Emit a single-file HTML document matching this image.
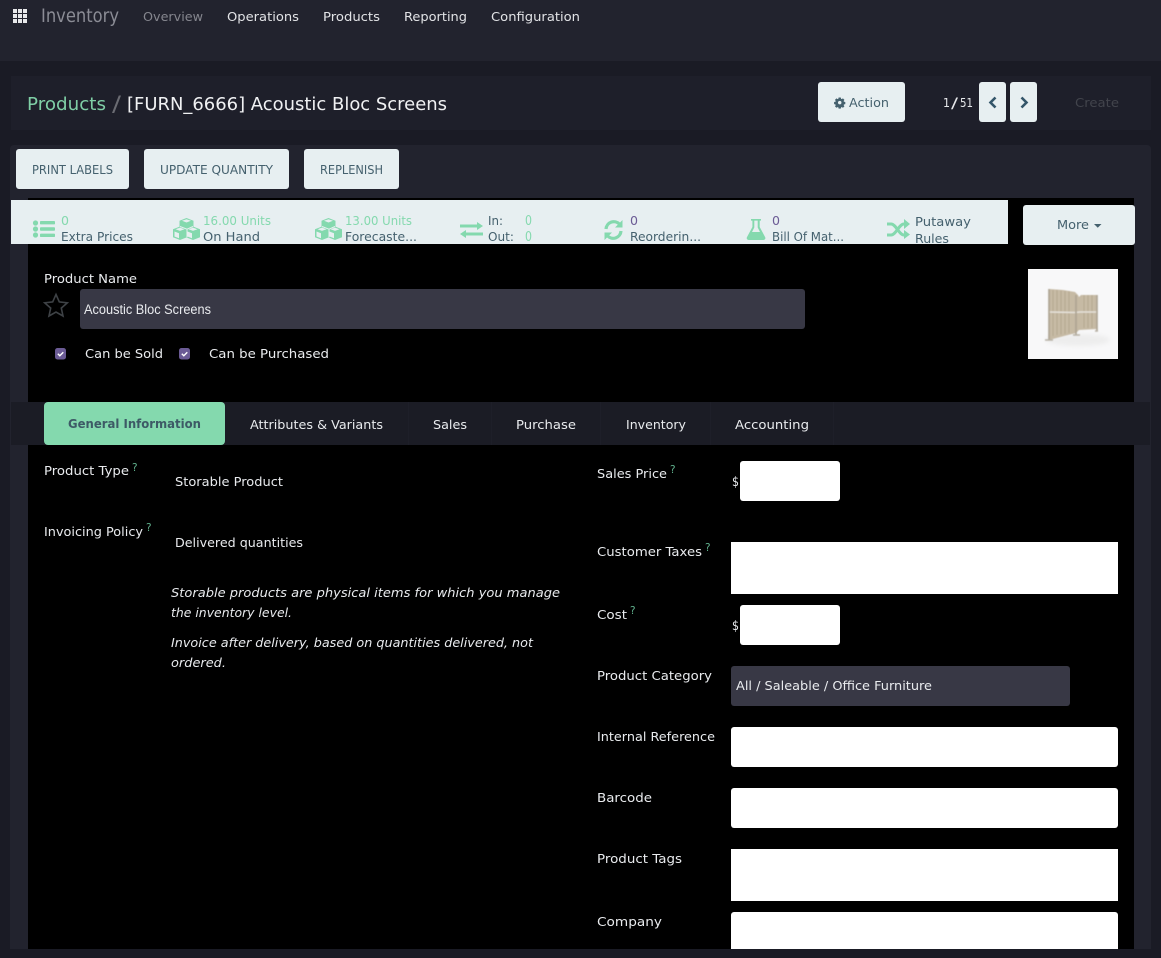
<!DOCTYPE html>
<html lang="en"><head><meta charset="utf-8"><title>Acoustic Bloc Screens</title>
<style>
html,body{margin:0;padding:0;width:1161px;height:958px;overflow:hidden;background:#1a1b25}
.b{position:absolute;box-sizing:border-box}
.btn{background:#e7eff1;border-radius:3px}
.w{background:#fff}.r{border-radius:3px}
svg{position:absolute;left:0;top:0}
text{font-family:"DejaVu Sans","Liberation Sans",sans-serif;font-size:12.5px;fill:#e9ebee}
.g{fill:#84d9ae}.d{fill:#45616e}.p{fill:#6b5b95}.q{fill:#5fae8b;font-size:10.5px}
.nav{fill:#e2e3e6;font-size:12.5px}
</style></head><body>
<div class="b" style="left:0;top:0;width:1161px;height:61px;background:#22232e"></div>
<div class="b" style="left:11px;top:76px;width:1140px;height:54px;background:#1e1f2a"></div>
<div class="b" style="left:10px;top:145px;width:1141px;height:804px;background:#22232e;border-radius:4px 4px 0 0"></div>
<div class="b" style="left:28px;top:198px;width:1106px;height:751px;background:#000"></div>
<div class="b" style="left:11px;top:200px;width:997px;height:44px;background:#e7eff1"></div>
<div class="b btn" style="left:1023px;top:205px;width:112px;height:40px"></div>
<div class="b btn" style="left:16px;top:149px;width:113px;height:40px"></div>
<div class="b btn" style="left:144px;top:149px;width:145px;height:40px"></div>
<div class="b btn" style="left:304px;top:149px;width:95px;height:40px"></div>
<div class="b btn" style="left:818px;top:82px;width:87px;height:40px"></div>
<div class="b btn" style="left:979px;top:82px;width:27px;height:40px"></div>
<div class="b btn" style="left:1010px;top:82px;width:27px;height:40px"></div>
<div class="b r" style="left:80px;top:289px;width:725px;height:40px;background:#383845"></div>
<div class="b" style="left:11px;top:402px;width:1139px;height:43px;background:#1b1c25"></div>
<div class="b" style="left:408px;top:402px;width:1px;height:43px;background:#1e1f29"></div>
<div class="b" style="left:491px;top:402px;width:1px;height:43px;background:#1e1f29"></div>
<div class="b" style="left:600px;top:402px;width:1px;height:43px;background:#1e1f29"></div>
<div class="b" style="left:710px;top:402px;width:1px;height:43px;background:#1e1f29"></div>
<div class="b" style="left:833px;top:402px;width:1px;height:43px;background:#1e1f29"></div>
<div class="b" style="left:44px;top:402px;width:181px;height:43px;background:#84d9ae;border-radius:4px"></div>
<div class="b w r" style="left:740px;top:461px;width:100px;height:40px"></div>
<div class="b w" style="left:731px;top:542px;width:387px;height:52px"></div>
<div class="b w r" style="left:740px;top:605px;width:100px;height:40px"></div>
<div class="b r" style="left:731px;top:666px;width:339px;height:40px;background:#383845"></div>
<div class="b w r" style="left:731px;top:727px;width:387px;height:40px"></div>
<div class="b w r" style="left:731px;top:788px;width:387px;height:40px"></div>
<div class="b w" style="left:731px;top:849px;width:387px;height:52px"></div>
<div class="b w" style="left:731px;top:912px;width:387px;height:37px;border-radius:3px 3px 0 0"></div>

<svg width="1161" height="958" viewBox="0 0 1161 958" xmlns="http://www.w3.org/2000/svg">
<defs><filter id="soft" x="-10%" y="-10%" width="120%" height="120%"><feGaussianBlur stdDeviation="0.5"/></filter>
<filter id="soft2" x="-20%" y="-50%" width="140%" height="200%"><feGaussianBlur stdDeviation="2.5"/></filter></defs>
<!-- grid icon -->
<g fill="#e8e9eb">
<rect x="13" y="9" width="4" height="4"/><rect x="18" y="9" width="4" height="4"/><rect x="23" y="9" width="4" height="4"/>
<rect x="13" y="14" width="4" height="4"/><rect x="18" y="14" width="4" height="4"/><rect x="23" y="14" width="4" height="4"/>
<rect x="13" y="19" width="4" height="4"/><rect x="18" y="19" width="4" height="4"/><rect x="23" y="19" width="4" height="4"/>
</g>
<text x="41" y="22" textLength="78" lengthAdjust="spacingAndGlyphs" style="font-size:19px;fill:#8b8c95">Inventory</text>
<text x="143" y="21" textLength="60" lengthAdjust="spacingAndGlyphs" style="fill:#85868e">Overview</text>
<text class="nav" x="227" y="21" textLength="72" lengthAdjust="spacingAndGlyphs">Operations</text>
<text class="nav" x="323" y="21" textLength="57" lengthAdjust="spacingAndGlyphs">Products</text>
<text class="nav" x="404" y="21" textLength="63" lengthAdjust="spacingAndGlyphs">Reporting</text>
<text class="nav" x="491" y="21" textLength="89" lengthAdjust="spacingAndGlyphs">Configuration</text>

<text x="27" y="110" textLength="79" lengthAdjust="spacingAndGlyphs" style="font-size:18px;fill:#7fcfa6">Products</text>
<text x="112" y="111" textLength="9" lengthAdjust="spacingAndGlyphs" style="font-size:21px;fill:#6a6b72">/</text>
<text x="127" y="110" textLength="320" lengthAdjust="spacingAndGlyphs" style="font-size:18px;fill:#f0f1f3">[FURN_6666] Acoustic Bloc Screens</text>

<!-- action -->
<g transform="translate(839.700 102.600) scale(.8) translate(-841 -103)">
<path fill="#45616e" d="M840 97h2l.4 1.600 1.200.5 1.400-.9 1.400 1.400-.9 1.400.5 1.200 1.600.4v2l-1.600.4-.5 1.200.9 1.400-1.400 1.400-1.400-.9-1.200.5-.4 1.600h-2l-.4-1.600-1.200-.5-1.400.9-1.400-1.400.9-1.400-.5-1.200-1.600-.4v-2l1.600-.4.5-1.200-.9-1.400 1.400-1.400 1.400.9 1.200-.5zM841 100.400a2.600 2.600 0 1 0 0 5.200 2.600 2.600 0 0 0 0-5.200z" fill-rule="evenodd" stroke="#45616e" stroke-width=".8"/>
</g>
<text class="d" x="849" y="107" textLength="40" lengthAdjust="spacingAndGlyphs">Action</text>
<text x="943" y="107" textLength="7" lengthAdjust="spacingAndGlyphs" style="fill:#e6e7ea">1</text>
<text x="951" y="108" textLength="7" lengthAdjust="spacingAndGlyphs" style="fill:#e6e7ea;font-size:14px">/</text>
<text x="960" y="107" textLength="13" lengthAdjust="spacingAndGlyphs" style="fill:#e6e7ea">51</text>
<path d="M995.500 97.500l-5 5 5 5" fill="none" stroke="#34566a" stroke-width="2.600"/>
<path d="M1021.500 97.500l5 5-5 5" fill="none" stroke="#34566a" stroke-width="2.600"/>
<text x="1075" y="107" textLength="44" lengthAdjust="spacingAndGlyphs" style="fill:#42444c">Create</text>

<text class="d" x="32" y="174" textLength="81" lengthAdjust="spacingAndGlyphs" style="font-size:12.500px">PRINT LABELS</text>
<text class="d" x="160" y="174" textLength="113" lengthAdjust="spacingAndGlyphs" style="font-size:12.500px">UPDATE QUANTITY</text>
<text class="d" x="320" y="174" textLength="63" lengthAdjust="spacingAndGlyphs" style="font-size:12.500px">REPLENISH</text>

<!-- stat icons -->
<g fill="#84d9ae">
<circle cx="35.500" cy="223" r="2.600"/><circle cx="35.500" cy="229" r="2.600"/><circle cx="35.500" cy="235" r="2.600"/>
<rect x="40" y="221" width="15" height="3.400" rx=".8"/><rect x="40" y="227.300" width="15" height="3.400" rx=".8"/><rect x="40" y="233.600" width="15" height="3.400" rx=".8"/>
</g>
<g fill="#84d9ae">
<path d="M186.500 218l7 2.700v7.600l-7 2.700-7-2.700v-7.600z"/><path d="M180 226.500l7 2.700v8l-7 2.800-7-2.800v-8z"/><path d="M193 226.500l7 2.700v8l-7 2.800-7-2.800v-8z"/>
</g>
<g fill="none" stroke="#e7eff1" stroke-width="1"><path d="M180 226.500l7 2.700M193 226.500l-6 2.700v8M187 237.200"/></g>
<g fill="#e7eff1"><path d="M182 220.800l4.500-1.600 4.500 1.600-4.500 1.700z"/><path d="M175.500 229.200l4.500-1.600 4.500 1.600-4.500 1.700z"/><path d="M188.500 229.200l4.500-1.600 4.500 1.600-4.500 1.700z"/><path d="M174.500 231.500l4.500 1.700v5l-4.500-1.700z"/><path d="M187.500 231.500l4.500 1.700v5l-4.500-1.700z"/></g>
<g fill="#84d9ae">
<path d="M328.500 218l7 2.700v7.600l-7 2.700-7-2.700v-7.600z"/><path d="M322 226.500l7 2.700v8l-7 2.800-7-2.800v-8z"/><path d="M335 226.500l7 2.700v8l-7 2.800-7-2.800v-8z"/>
</g>
<g fill="none" stroke="#e7eff1" stroke-width="1"><path d="M322 226.500l7 2.700M335 226.500l-6 2.700v8"/></g>
<g fill="#e7eff1"><path d="M324 220.800l4.500-1.600 4.500 1.600-4.500 1.700z"/><path d="M317.500 229.200l4.500-1.600 4.500 1.600-4.500 1.700z"/><path d="M330.500 229.200l4.500-1.600 4.500 1.600-4.500 1.700z"/><path d="M316.500 231.500l4.500 1.700v5l-4.500-1.700z"/><path d="M329.500 231.500l4.500 1.700v5l-4.500-1.700z"/></g>
<path fill="#84d9ae" d="M460 224.500h17v-2.500l6 4-6 4v-2.500h-17zM483 232.500h-17v-2.500l-6 4 6 4v-2.500h17z"/>
<path fill="none" stroke="#84d9ae" stroke-width="3.200" d="M606 229a7.800 7.800 0 0 1 13.500-4.800M621 231a7.800 7.800 0 0 1-13.500 4.800"/>
<path fill="#84d9ae" d="M622.500 220v7.500h-7.500zM604.500 240v-7.500h7.500z"/>
<path fill="#84d9ae" d="M751 219h10v1.600h-1.300v6.400l5.500 10.300c.6 1.300-.2 2.700-1.700 2.700h-14.900c-1.500 0-2.300-1.400-1.700-2.700l5.500-10.300v-6.400H751zm3.300 1.600v6.900l-2.300 4.500h8l-2.300-4.500v-6.900z" fill-rule="evenodd"/>
<path fill="none" stroke="#84d9ae" stroke-width="3" d="M887 224h4c5 0 8 11 13 11h1M887 235h4c5 0 8-11 13-11h1"/>
<path fill="#84d9ae" d="M904 219l6 5-6 5zM904 230l6 4.500-6 4.500z"/>

<text class="g" x="61" y="225" textLength="8" lengthAdjust="spacingAndGlyphs">0</text>
<text class="d" x="61" y="241" textLength="72" lengthAdjust="spacingAndGlyphs">Extra Prices</text>
<text class="g" x="203" y="225" textLength="68" lengthAdjust="spacingAndGlyphs">16.00 Units</text>
<text class="d" x="203" y="241" textLength="57" lengthAdjust="spacingAndGlyphs">On Hand</text>
<text class="g" x="345" y="225" textLength="67" lengthAdjust="spacingAndGlyphs">13.00 Units</text>
<text class="d" x="345" y="241" textLength="72" lengthAdjust="spacingAndGlyphs">Forecaste...</text>
<text class="d" x="488" y="225" textLength="15" lengthAdjust="spacingAndGlyphs">In:</text>
<text class="d" x="488" y="241" textLength="26" lengthAdjust="spacingAndGlyphs">Out:</text>
<text class="g" x="525" y="225" textLength="7" lengthAdjust="spacingAndGlyphs" style="font-size:13px">0</text>
<text class="g" x="525" y="241" textLength="7" lengthAdjust="spacingAndGlyphs" style="font-size:13px">0</text>
<text class="p" x="630" y="225" textLength="8" lengthAdjust="spacingAndGlyphs">0</text>
<text class="d" x="630" y="241" textLength="71" lengthAdjust="spacingAndGlyphs">Reorderin...</text>
<text class="p" x="772" y="225" textLength="8" lengthAdjust="spacingAndGlyphs">0</text>
<text class="d" x="772" y="241" textLength="72" lengthAdjust="spacingAndGlyphs">Bill Of Mat...</text>
<text class="d" x="915" y="226" textLength="56" lengthAdjust="spacingAndGlyphs">Putaway</text>
<text class="d" x="915" y="243" textLength="34" lengthAdjust="spacingAndGlyphs">Rules</text>
<text class="d" x="1057" y="229" textLength="32" lengthAdjust="spacingAndGlyphs">More</text>
<path fill="#45616e" d="M1094 224h7.500l-3.750 3.800z"/>

<text x="44" y="283" textLength="93" lengthAdjust="spacingAndGlyphs">Product Name</text>
<path fill="none" stroke="#3e4246" stroke-width="1.600" d="M56 294.500l3.300 7.400 8 .9-6 5.300 1.700 7.900-7-4-7 4 1.700-7.900-6-5.300 8-.9z"/>
<text x="84" y="314" textLength="127" lengthAdjust="spacingAndGlyphs" style="font-family:'Liberation Sans',sans-serif;font-size:13.500px">Acoustic Bloc Screens</text>
<rect x="55" y="348" width="11" height="11.500" rx="2.500" fill="#6b5b95"/>
<path d="M57.800 353.800l2 2 3.500-3.600" fill="none" stroke="#fff" stroke-width="1.400"/>
<rect x="179" y="348" width="11" height="11.500" rx="2.500" fill="#6b5b95"/>
<path d="M181.800 353.800l2 2 3.500-3.600" fill="none" stroke="#fff" stroke-width="1.400"/>
<text x="85" y="358" textLength="78" lengthAdjust="spacingAndGlyphs">Can be Sold</text>
<text x="209" y="358" textLength="120" lengthAdjust="spacingAndGlyphs">Can be Purchased</text>

<!-- product image -->
<rect x="1028" y="269" width="90" height="90" fill="#f8f8f9"/>
<ellipse cx="1078" cy="340" rx="32" ry="6" fill="#ededed" filter="url(#soft2)"/>
<g filter="url(#soft)">
<path fill="#c6baa4" d="M1049 289l14 1 12 2 3 3 1 2 2-2 16 0v34l-18 1-3 3-12 3-15 4z"/>
<path stroke="#b5a88f" stroke-width="1" d="M1053 290v46M1057 290v45M1061 290.500v44M1065 291v43M1069 291v42M1084 295v33M1088 295v33M1092 295v33"/>
<path stroke="#e6e2da" stroke-width="1.500" d="M1049 312l26 .5 5-.5 17 0"/>
<path stroke="#aca392" stroke-width="1.600" d="M1049 289v51M1076 295v40M1097 295v36"/>
<path stroke="#b8b2a6" stroke-width="1.500" d="M1045 340h8M1073 335h7M1095 331h3"/>
</g>

<!-- tabs -->
<text x="68" y="428" textLength="133" lengthAdjust="spacingAndGlyphs" style="font-weight:bold;fill:#3d5a66;font-size:12.500px">General Information</text>
<text x="250" y="429" textLength="133" lengthAdjust="spacingAndGlyphs">Attributes &amp; Variants</text>
<text x="433" y="429" textLength="34" lengthAdjust="spacingAndGlyphs">Sales</text>
<text x="516" y="429" textLength="60" lengthAdjust="spacingAndGlyphs">Purchase</text>
<text x="626" y="429" textLength="60" lengthAdjust="spacingAndGlyphs">Inventory</text>
<text x="735" y="429" textLength="74" lengthAdjust="spacingAndGlyphs">Accounting</text>

<!-- left form -->
<text x="44" y="475" textLength="85" lengthAdjust="spacingAndGlyphs">Product Type</text><text class="q" x="132" y="471">?</text>
<text x="175" y="486" textLength="108" lengthAdjust="spacingAndGlyphs">Storable Product</text>
<text x="44" y="536" textLength="99" lengthAdjust="spacingAndGlyphs">Invoicing Policy</text><text class="q" x="146" y="531">?</text>
<text x="175" y="547" textLength="128" lengthAdjust="spacingAndGlyphs">Delivered quantities</text>
<text x="171" y="597" textLength="389" lengthAdjust="spacingAndGlyphs" font-style="italic">Storable products are physical items for which you manage</text>
<text x="171" y="617" textLength="121" lengthAdjust="spacingAndGlyphs" font-style="italic">the inventory level.</text>
<text x="171" y="647" textLength="362" lengthAdjust="spacingAndGlyphs" font-style="italic">Invoice after delivery, based on quantities delivered, not</text>
<text x="171" y="667" textLength="55" lengthAdjust="spacingAndGlyphs" font-style="italic">ordered.</text>

<!-- right form -->
<text x="597" y="478" textLength="70" lengthAdjust="spacingAndGlyphs">Sales Price</text><text class="q" x="670" y="473">?</text>
<text x="732" y="486" textLength="7" lengthAdjust="spacingAndGlyphs" style="font-size:13.500px">$</text>
<text x="597" y="556" textLength="105" lengthAdjust="spacingAndGlyphs">Customer Taxes</text><text class="q" x="705" y="551">?</text>
<text x="597" y="619" textLength="30" lengthAdjust="spacingAndGlyphs">Cost</text><text class="q" x="630" y="614">?</text>
<text x="732" y="630" textLength="7" lengthAdjust="spacingAndGlyphs" style="font-size:13.500px">$</text>
<text x="597" y="680" textLength="115" lengthAdjust="spacingAndGlyphs">Product Category</text>
<text x="736" y="690" textLength="196" lengthAdjust="spacingAndGlyphs">All / Saleable / Office Furniture</text>
<text x="597" y="741" textLength="118" lengthAdjust="spacingAndGlyphs">Internal Reference</text>
<text x="597" y="802" textLength="55" lengthAdjust="spacingAndGlyphs">Barcode</text>
<text x="597" y="863" textLength="85" lengthAdjust="spacingAndGlyphs">Product Tags</text>
<text x="597" y="926" textLength="65" lengthAdjust="spacingAndGlyphs">Company</text>
</svg>
<div class="b" style="left:915px;top:244px;width:60px;height:4px;background:#000"></div>
</body></html>
